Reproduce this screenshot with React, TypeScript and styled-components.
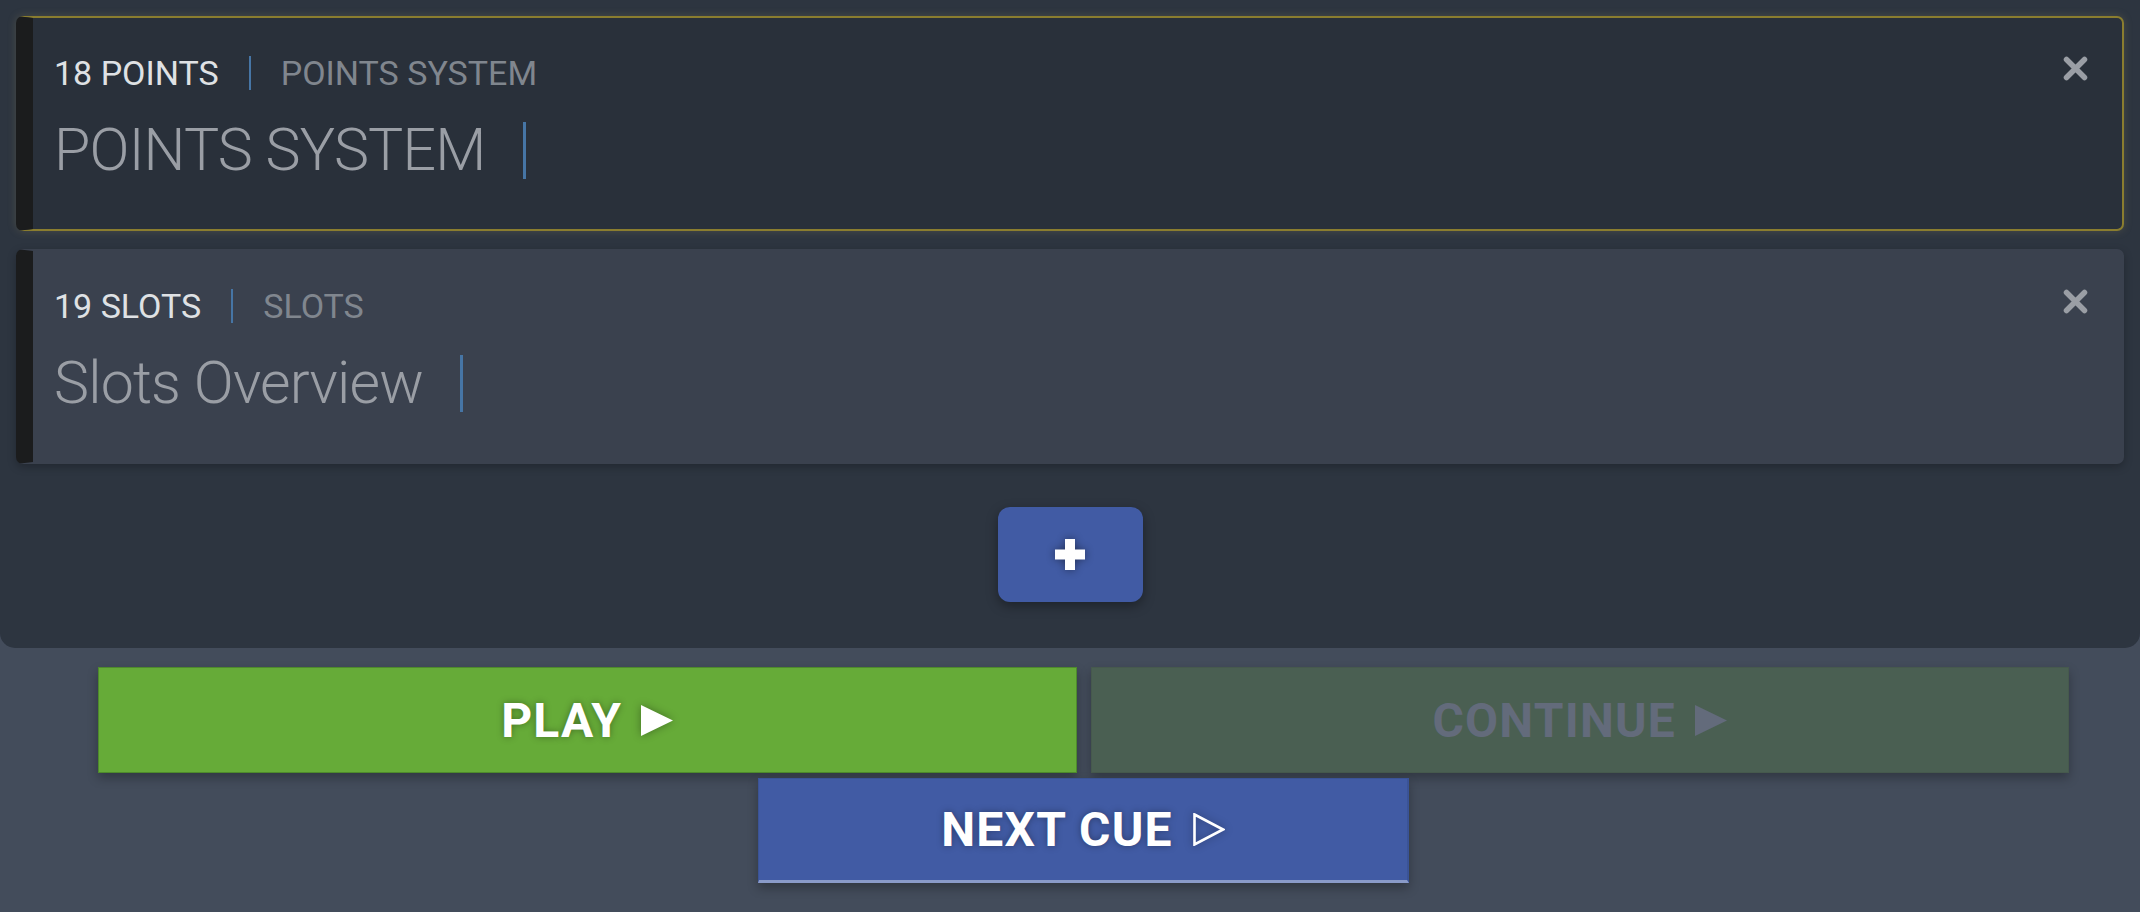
import React from "react";
import styled, { createGlobalStyle } from "styled-components";

const GlobalStyle = createGlobalStyle`
  html, body {
    margin: 0;
    padding: 0;
    background: #434c5b;
  }
  body {
    font-family: Roboto, "Noto Sans", "Liberation Sans", sans-serif;
    width: 2140px;
    height: 912px;
    overflow: hidden;
  }
  * { box-sizing: border-box; }
`;

const Page = styled.div`
  display: flex;
  flex-direction: column;
  width: 2140px;
`;

const Panel = styled.section`
  background: #2d3540;
  border-radius: 0 0 15px 15px;
  padding: 16px 16px 46px 16px;
  display: flex;
  flex-direction: column;
`;

const CardList = styled.div`
  display: flex;
  flex-direction: column;
  gap: 18px;
`;

const Card = styled.div<{ $active?: boolean }>`
  height: 215px;
  display: flex;
  border-radius: 7px;
  border: 2px solid ${(p) => (p.$active ? "#8a7d2f" : "transparent")};
  border-left: 17px solid #1b1c1d;
  background: ${(p) => (p.$active ? "#29303a" : "#3a414e")};
  box-shadow: ${(p) =>
    p.$active
      ? "0 0 9px rgba(150, 140, 90, 0.28)"
      : "0 3px 8px rgba(0, 0, 0, 0.25)"};
  padding: 38px 34px 0 21px;
`;

const CardBody = styled.div`
  flex: 1;
  display: flex;
  flex-direction: column;
`;

const LabelRow = styled.div`
  display: flex;
  align-items: center;
  height: 34px;
  font-size: 34px;
  line-height: 34px;
  font-weight: 400;
`;

const LabelPrimary = styled.span`
  color: #dfe1e4;
`;

const LabelSecondary = styled.span`
  color: #80868e;
`;

const Divider = styled.span<{ $h: number; $w: number; $gap: number }>`
  display: inline-block;
  width: ${(p) => p.$w}px;
  height: ${(p) => p.$h}px;
  background: #4675a5;
  margin: 0 ${(p) => p.$gap}px;
`;

const TitleRow = styled.div`
  display: flex;
  align-items: center;
  margin-top: 30px;
  height: 60px;
  font-size: 59px;
  line-height: 60px;
  font-weight: 300;
  letter-spacing: -0.8px;
  color: #9a9ea5;
`;

const CloseButton = styled.button`
  width: 25px;
  height: 25px;
  padding: 0;
  border: none;
  background: none;
  color: #9a9ea5;
  display: flex;
  cursor: pointer;
`;

const AddRow = styled.div`
  display: flex;
  justify-content: center;
  margin-top: 43px;
`;

const AddButton = styled.button`
  width: 145px;
  height: 95px;
  border: none;
  border-radius: 12px;
  background: #415ba4;
  box-shadow: 0 4px 12px rgba(0, 0, 0, 0.35);
  display: flex;
  align-items: center;
  justify-content: center;
  cursor: pointer;
  svg {
    filter: drop-shadow(0 0 4px rgba(0, 0, 0, 0.45));
  }
`;

const Controls = styled.div`
  padding: 19px 71px 0 98px;
  display: flex;
  flex-direction: column;
`;

const PrimaryRow = styled.div`
  display: grid;
  grid-template-columns: 1fr 1fr;
  gap: 14px;
  height: 106px;
`;

const ActionButton = styled.button<{ $variant: "play" | "continue" | "next" }>`
  display: flex;
  align-items: center;
  justify-content: center;
  gap: 19px;
  font-family: Roboto, "Noto Sans", "Liberation Sans", sans-serif;
  font-weight: 700;
  font-size: 48px;
  letter-spacing: 1.2px;
  cursor: pointer;
  border: 1px solid
    ${(p) =>
      p.$variant === "play"
        ? "#4e8a2c"
        : p.$variant === "continue"
        ? "#46594d"
        : "#3a5397"};
  background: ${(p) =>
    p.$variant === "play"
      ? "#66ab38"
      : p.$variant === "continue"
      ? "#4a5f52"
      : "#415ba4"};
  color: ${(p) => (p.$variant === "continue" ? "#636b7b" : "#ffffff")};
  text-shadow: ${(p) =>
    p.$variant === "continue" ? "none" : "0 0 7px rgba(0, 0, 0, 0.35)"};
  box-shadow: 0 5px 10px rgba(0, 0, 0, 0.28);
  svg {
    filter: ${(p) =>
      p.$variant === "continue" ? "none" : "drop-shadow(0 0 4px rgba(0,0,0,0.35))"};
  }
`;

const NextCueButton = styled(ActionButton)`
  width: 651px;
  height: 105px;
  margin: 5px auto 0 auto;
  border-bottom: 3px solid #8a9bc9;
  border-right: 2px solid #3a5397;
  gap: 20px;
`;

const FilledArrow = ({ color }: { color: string }) => (
  <svg width="32" height="31" viewBox="0 0 32 31">
    <polygon points="0,0 32,15.5 0,31" fill={color} />
  </svg>
);

const OutlineArrow = () => (
  <svg width="32" height="33" viewBox="0 0 32 33">
    <polygon
      points="1.5,1.5 30,16.5 1.5,31.5"
      fill="none"
      stroke="#ffffff"
      strokeWidth="2.6"
      strokeLinejoin="miter"
    />
  </svg>
);

const CloseIcon = () => (
  <svg width="25" height="25" viewBox="0 0 25 25">
    <path
      d="M3.5 3.5 L21.5 21.5 M21.5 3.5 L3.5 21.5"
      stroke="currentColor"
      strokeWidth="5.5"
      strokeLinecap="round"
    />
  </svg>
);

const PlusIcon = () => (
  <svg width="30" height="31" viewBox="0 0 30 31">
    <rect x="10" y="0" width="10" height="31" fill="#ffffff" />
    <rect x="0" y="10.5" width="30" height="10" fill="#ffffff" />
  </svg>
);

type Cue = {
  id: number;
  kind: string;
  category: string;
  title: string;
  active?: boolean;
};

const cues: Cue[] = [
  { id: 1, kind: "18 POINTS", category: "POINTS SYSTEM", title: "POINTS SYSTEM", active: true },
  { id: 2, kind: "19 SLOTS", category: "SLOTS", title: "Slots Overview" },
];

export default function App() {
  return (
    <>
      <GlobalStyle />
      <Page>
        <Panel>
          <CardList>
            {cues.map((c) => (
              <Card key={c.id} $active={c.active}>
                <CardBody>
                  <LabelRow>
                    <LabelPrimary>{c.kind}</LabelPrimary>
                    <Divider $w={2} $h={34} $gap={30} />
                    <LabelSecondary>{c.category}</LabelSecondary>
                  </LabelRow>
                  <TitleRow>
                    <span>{c.title}</span>
                    <Divider $w={3} $h={57} $gap={37} />
                  </TitleRow>
                </CardBody>
                <CloseButton aria-label="Remove">
                  <CloseIcon />
                </CloseButton>
              </Card>
            ))}
          </CardList>
          <AddRow>
            <AddButton aria-label="Add">
              <PlusIcon />
            </AddButton>
          </AddRow>
        </Panel>
        <Controls>
          <PrimaryRow>
            <ActionButton $variant="play">
              <span>PLAY</span>
              <FilledArrow color="#ffffff" />
            </ActionButton>
            <ActionButton $variant="continue">
              <span>CONTINUE</span>
              <FilledArrow color="#636b7b" />
            </ActionButton>
          </PrimaryRow>
          <NextCueButton $variant="next">
            <span>NEXT CUE</span>
            <OutlineArrow />
          </NextCueButton>
        </Controls>
      </Page>
    </>
  );
}
